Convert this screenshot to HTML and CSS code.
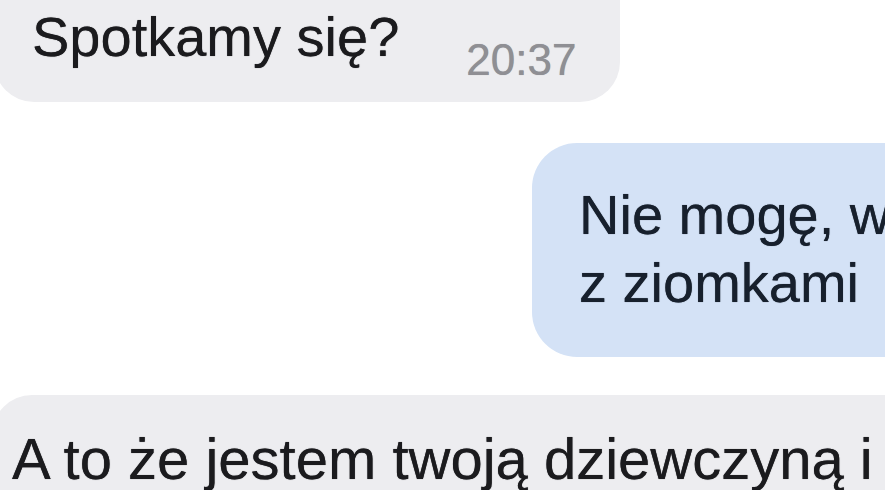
FILE: index.html
```html
<!DOCTYPE html>
<html lang="pl">

<head>
    <meta charset="UTF-8">
    <meta name="viewport" content="width=device-width, initial-scale=1.0">
    <title>Czat</title>
    <link rel="stylesheet" href="styles.css">
</head>

<body>
    <div class="chat">
        <div class="msg msg-in first">
            <span class="msg-text">Spotkamy się?</span>
            <span class="msg-time">20:37</span>
        </div>

        <div class="msg msg-out">
            <span class="msg-text">Nie mogę, wychodzę<br>z ziomkami</span>
        </div>

        <div class="msg msg-in last">
            <span class="msg-text">A to że jestem twoją dziewczyną i</span>
        </div>
    </div>
</body>

</html>
```

FILE: styles.css
```css
body {
    font-family: "Liberation Sans", Arial, sans-serif;
    background-color: #fff;
    margin: 0;
    padding: 0;
    overflow: hidden;
}

.chat {
    display: flex;
    flex-direction: column;
    align-items: flex-start;
    width: 885px;
    height: 490px;
}

.msg {
    white-space: nowrap;
    flex-shrink: 0;
    text-shadow: 0 0 0.7px currentColor;
}

.msg-in {
    background-color: #ededf0;
    color: #1b1b1e;
}

.first {
    display: flex;
    align-items: flex-end;
    margin-top: -40px;
    margin-left: -6px;
    padding: 45px 44px 20px 38px;
    border-radius: 40px;
}

.first .msg-text {
    font-size: 56px;
    line-height: 64px;
    margin-bottom: 13px;
}

.msg-time {
    font-size: 44px;
    line-height: 44px;
    color: #8f8f94;
    margin-left: 67px;
}

.msg-out {
    background-color: #d4e2f6;
    color: #17202d;
    margin-top: 41px;
    margin-left: 532px;
    width: 520px;
    padding: 38px 0 40px 47px;
    border-radius: 45px;
    font-size: 56px;
    line-height: 68px;
}

.last {
    margin-top: 38px;
    margin-left: -8px;
    width: 1100px;
    padding: 31px 0 20px 20px;
    border-radius: 40px;
    font-size: 58px;
    line-height: 66px;
}
```
